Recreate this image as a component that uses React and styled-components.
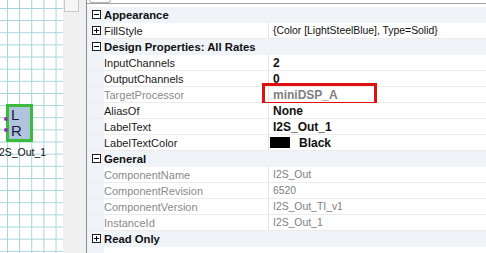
import styled, { createGlobalStyle } from "styled-components";

const GlobalStyle = createGlobalStyle`
  html, body {
    margin: 0;
    padding: 0;
    background: #ffffff;
  }
  body {
    font-family: "Liberation Sans", Arial, sans-serif;
    font-size: 11px;
    color: #000;
  }
`

const Screen = styled.div`
  width: 486px;
  height: 253px;
  display: flex;
  overflow: hidden;
`

const Canvas = styled.div`
  position: relative;
  width: 63px;
  height: 100%;
  overflow: hidden;
  background-color: #fff;
  background-image:
    linear-gradient(to right, #a3d3da 0, #a3d3da 1.4px, transparent 1.4px),
    linear-gradient(to bottom, #a3d3da 0, #a3d3da 1.4px, transparent 1.4px);
  background-size: 12.15px 12.15px;
  background-position: 7px 8px;
`

const Block = styled.div`
  position: absolute;
  left: 6px;
  top: 104px;
  width: 27px;
  height: 38px;
  box-sizing: border-box;
  border: 3px solid #3cba3c;
  background: #b0c4de;
  display: flex;
  flex-direction: column;
  padding-left: 2px;
  font-size: 15px;
  line-height: 16px;
  color: #1a1a40;
`

const Pin = styled.span`
  position: absolute;
  left: -5px;
  top: ${(p) => p.top}px;
  width: 4px;
  height: 4px;
  border-radius: 50%;
  background: #8a3ca8;
`

const BlockLabel = styled.div`
  position: absolute;
  left: -4px;
  top: 146px;
  font-size: 10.5px;
  color: #111;
  white-space: nowrap;
`

const Scrollbar = styled.div`
  width: 17px;
  height: 100%;
  background: #f0f0f0;
  display: flex;
  justify-content: center;
`

const Thumb = styled.div`
  width: 15px;
  height: 12px;
  box-sizing: border-box;
  border: 1px solid #c8c8c8;
  border-top: none;
  background: #f6f6f6;
`

const Splitter = styled.div`
  width: 6px;
  height: 100%;
  background: #f0f0f0;
  border-right: 1px solid #8c8c8c;
`

const Panel = styled.div`
  flex: 1;
  display: flex;
  flex-direction: column;
  background: #fff;
`

const Toolbar = styled.div`
  height: 3px;
  border-bottom: 1px solid #a0a0a0;
  background: #fff;
  display: flex;
  align-items: flex-end;
  padding-left: 2px;
`

const ToolTab = styled.div`
  width: 20px;
  height: 3px;
  border: 1px solid #b4b4b4;
  border-top: none;
  border-radius: 0 0 3px 3px;
`

const Grid = styled.div`
  margin-top: 3px;
  display: flex;
  flex-direction: column;
  flex: 1;
  background: linear-gradient(to right, #f0f3f8 0, #f0f3f8 17px, #fff 17px);
`

const Row = styled.div`
  position: relative;
  height: 16px;
  box-sizing: border-box;
  display: grid;
  grid-template-columns: 17px 165px 1fr;
  align-items: center;
  border-bottom: 1px solid ${(p) => (p.category ? "#f0f3f8" : "#ececec")};
  background: ${(p) => (p.category ? "#f0f3f8" : "#fff")};
`

const Gutter = styled.div`
  height: 100%;
  background: #f0f3f8;
  display: flex;
  align-items: center;
  justify-content: center;
  padding-left: 1px;
`

const Toggle = styled.div`
  position: relative;
  width: 9px;
  height: 9px;
  box-sizing: border-box;
  border: 1px solid #1e1e1e;
  background: #fff;

  &::before {
    content: "";
    position: absolute;
    left: 1px;
    top: 3px;
    width: 5px;
    height: 1px;
    background: #000;
  }
  &::after {
    content: "";
    display: ${(p) => (p.open ? "none" : "block")};
    position: absolute;
    left: 3px;
    top: 1px;
    width: 1px;
    height: 5px;
    background: #000;
  }
`

const CategoryName = styled.div`
  grid-column: 2 / 4;
  font-weight: bold;
  font-size: 11.3px;
  color: #111;
  white-space: nowrap;
`

const Name = styled.div`
  height: 100%;
  display: flex;
  align-items: center;
  color: ${(p) => (p.readonly ? "#8a8a8a" : "#1a1a1a")};
  border-right: 1px solid #e4e4e4;
  white-space: nowrap;
`

const Value = styled.div`
  padding-left: 4px;
  display: flex;
  align-items: center;
  gap: 9px;
  white-space: nowrap;
  font-weight: ${(p) => (p.bold ? "bold" : "normal")};
  color: ${(p) => (p.readonly ? "#808080" : "#111")};
  font-size: ${(p) => (p.bold ? "12px" : "10.4px")};
`

const Swatch = styled.span`
  width: 20px;
  height: 11px;
  margin-left: -3px;
  background: #000;
`

const Highlight = styled.div`
  position: absolute;
  left: 175px;
  top: -4px;
  width: 115px;
  height: 22px;
  box-sizing: border-box;
  border: 3px solid #e01010;
  pointer-events: none;
`

const rows = [
  { category: "Appearance", open: true },
  { name: "FillStyle", value: "{Color [LightSteelBlue], Type=Solid}", expandable: true },
  { category: "Design Properties: All Rates", open: true },
  { name: "InputChannels", value: "2", bold: true },
  { name: "OutputChannels", value: "0", bold: true },
  { name: "TargetProcessor", value: "miniDSP_A", bold: true, readonly: true, highlight: true },
  { name: "AliasOf", value: "None", bold: true },
  { name: "LabelText", value: "I2S_Out_1", bold: true },
  { name: "LabelTextColor", value: "Black", bold: true, swatch: true },
  { category: "General", open: true },
  { name: "ComponentName", value: "I2S_Out", readonly: true },
  { name: "ComponentRevision", value: "6520", readonly: true },
  { name: "ComponentVersion", value: "I2S_Out_TI_v1", readonly: true },
  { name: "InstanceId", value: "I2S_Out_1", readonly: true },
  { category: "Read Only", open: false },
]

export default function App() {
  return (
    <>
      <GlobalStyle />
      <Screen>
        <Canvas>
          <Block>
            <Pin top={10} />
            <Pin top={21} />
            <span>L</span>
            <span>R</span>
          </Block>
          <BlockLabel>I2S_Out_1</BlockLabel>
        </Canvas>
        <Scrollbar>
          <Thumb />
        </Scrollbar>
        <Splitter />
        <Panel>
          <Toolbar>
            <ToolTab />
          </Toolbar>
          <Grid>
            {rows.map((r, i) =>
              r.category ? (
                <Row key={i} category>
                  <Gutter>
                    <Toggle open={r.open} />
                  </Gutter>
                  <CategoryName>{r.category}</CategoryName>
                </Row>
              ) : (
                <Row key={i}>
                  <Gutter>{r.expandable && <Toggle open={false} />}</Gutter>
                  <Name readonly={r.readonly}>{r.name}</Name>
                  <Value bold={r.bold} readonly={r.readonly}>
                    {r.swatch && <Swatch />}
                    {r.value}
                  </Value>
                  {r.highlight && <Highlight />}
                </Row>
              )
            )}
          </Grid>
        </Panel>
      </Screen>
    </>
  )
}
